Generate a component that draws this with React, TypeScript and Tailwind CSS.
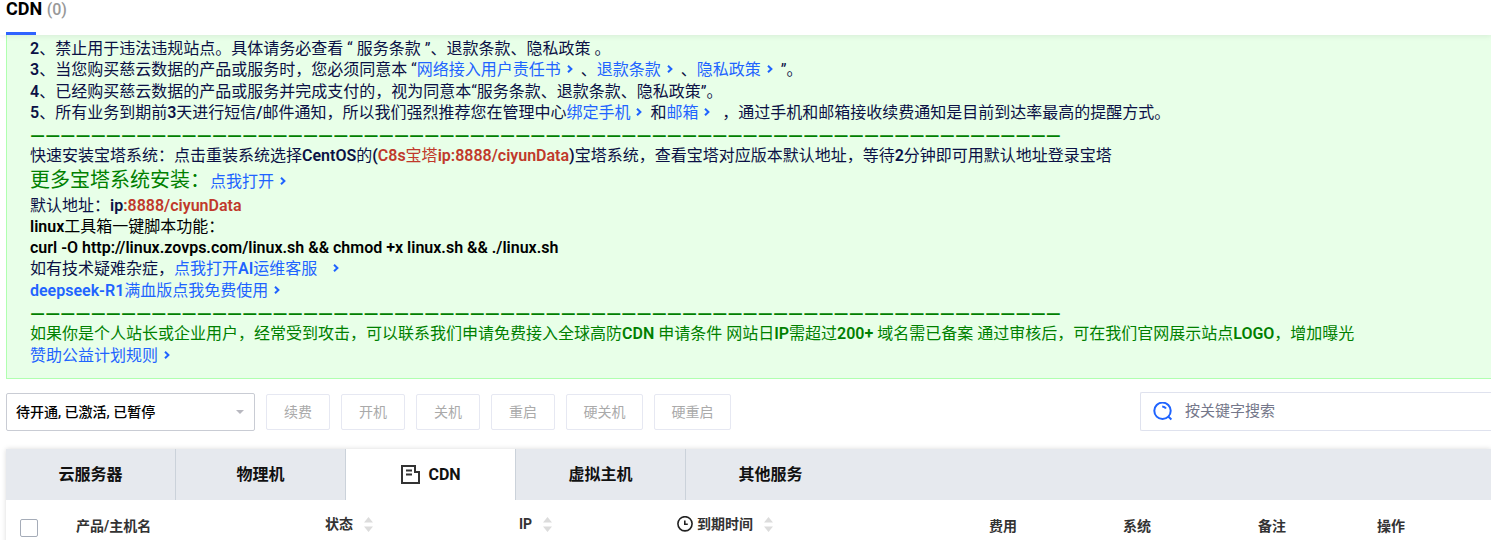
import React from "react";

const divider = "—".repeat(68);

const actions = [
  { name: "续费", width: "w-16" },
  { name: "开机", width: "w-16" },
  { name: "关机", width: "w-16" },
  { name: "重启", width: "w-16" },
  { name: "硬关机", width: "w-[77px]" },
  { name: "硬重启", width: "w-[77px]" },
];

const tabs = ["云服务器", "物理机", "CDN", "虚拟主机", "其他服务"];

const columns = [
  { name: "产品/主机名", width: "w-[249px]" },
  { name: "状态", width: "w-[194px]", sortable: true },
  { name: "IP", width: "w-[158px]", sortable: true },
  { name: "到期时间", width: "w-[312px]", sortable: true, clock: true },
  { name: "费用", width: "w-[134px]" },
  { name: "系统", width: "w-[135px]" },
  { name: "备注", width: "w-[119px]" },
  { name: "操作", width: "w-auto" },
];

const B = ({ children }: { children: React.ReactNode }) => (
  <span className="font-semibold">{children}</span>
);

const NoticeLink = ({
  children,
  wide,
}: {
  children: React.ReactNode;
  wide?: boolean;
}) => (
  <a href="#" className="text-[#1f64ff] hover:underline">
    {children}
    <svg
      viewBox="0 0 6 8"
      className={`inline-block h-2 w-1.5 align-[2px] ${wide ? "ml-4" : "ml-1.5"}`}
      fill="none"
      stroke="currentColor"
      strokeWidth="2"
      aria-hidden="true"
    >
      <path d="M1 0.8 L4.4 4 L1 7.2" />
    </svg>
  </a>
);

const Divider = () => (
  <p className="font-[Lato] text-[19px] leading-[21px] font-bold text-[#008000]">{divider}</p>
);

const SortArrows = () => (
  <svg viewBox="0 0 9 15" className="h-[15px] w-[9px]" fill="#dcdcdc" aria-hidden="true">
    <path d="M0 5.5 L4.5 0 L9 5.5 Z M0 9.5 L4.5 15 L9 9.5 Z" />
  </svg>
);

const ClockIcon = () => (
  <svg
    viewBox="0 0 16 16"
    className="h-4 w-4"
    fill="none"
    stroke="#222"
    strokeWidth="1.6"
    aria-hidden="true"
  >
    <circle cx="8" cy="7.8" r="7.1" />
    <path d="M7.8 4.5 V8.2 H10.8" />
  </svg>
);

const CdnIcon = () => (
  <svg
    viewBox="0 0 20 20"
    className="h-5 w-5"
    fill="none"
    stroke="#333"
    strokeWidth="2"
    aria-hidden="true"
  >
    <path d="M2 1 H15 V7 H19 V18 H2 Z" />
    <path d="M6 5.5 H12 M6 9.5 H12" />
  </svg>
);

const SearchIcon = () => (
  <svg
    viewBox="0 0 20 20"
    className="h-5 w-5 shrink-0"
    fill="none"
    stroke="#1f64ff"
    strokeWidth="2"
    aria-hidden="true"
  >
    <circle cx="9.5" cy="8.8" r="8.2" />
    <path d="M15.2 14.6 L18.4 17.6" />
    <path d="M9.2 4.4 C11 4.4 12.2 5.2 13 6.6" />
  </svg>
);

const Header = () => (
  <header className="relative h-[35px] bg-white pl-1.5 shadow-[0_1px_6px_rgba(0,0,0,0.08)]">
    <div className="flex h-full w-fit flex-col justify-between">
      <h1 className="text-lg leading-[18px] font-bold text-black">
        CDN <span className="text-base leading-[18px] font-medium text-[#999]">(0)</span>
      </h1>
      <div className="h-[3px] w-[30px] bg-[#2f62ff]" />
    </div>
  </header>
);

const Notice = () => (
  <section className="ml-1.5 border-b border-l border-[#b0ffb0] bg-[#e8ffe8] pt-[3px] pb-[11px] pl-[23px] text-base leading-[21px] whitespace-nowrap text-[#0b1145]">
    <p>
      <B>2</B>、禁止用于违法违规站点。具体请务必查看 “ 服务条款 ”、退款条款、隐私政策 。
    </p>
    <p className="leading-[22px]">
      <B>3</B>、当您购买慈云数据的产品或服务时，您必须同意本 “
      <NoticeLink>网络接入用户责任书</NoticeLink> &nbsp;、<NoticeLink>退款条款</NoticeLink>{" "}
      &nbsp;、<NoticeLink>隐私政策</NoticeLink> &nbsp;”。
    </p>
    <p>
      <B>4</B>、已经购买慈云数据的产品或服务并完成支付的，视为同意本“服务条款、退款条款、隐私政策”。
    </p>
    <p className="leading-[22px]">
      <B>5</B>、所有业务到期前<B>3</B>天进行短信<B>/</B>
      邮件通知，所以我们强烈推荐您在管理中心<NoticeLink>绑定手机</NoticeLink> &nbsp;和
      <NoticeLink>邮箱</NoticeLink> &nbsp; ，通过手机和邮箱接收续费通知是目前到达率最高的提醒方式。
    </p>
    <Divider />
    <p className="leading-[22px]">
      快速安装宝塔系统：点击重装系统选择<B>CentOS</B>的<B>(</B>
      <span className="text-[#c0392b]">
        <B>C8s</B>宝塔<B>ip:8888/ciyunData</B>
      </span>
      <B>)</B>宝塔系统，查看宝塔对应版本默认地址，等待<B>2</B>分钟即可用默认地址登录宝塔
    </p>
    <p className="leading-[27px]">
      <span className="text-xl leading-[27px] text-[#008000]">更多宝塔系统安装：</span>
      <NoticeLink>点我打开</NoticeLink>
    </p>
    <p>
      默认地址：<B>ip<span className="text-[#c0392b]">:8888/ciyunData</span></B>
    </p>
    <p className="text-black">
      <B>linux</B>工具箱一键脚本功能：
    </p>
    <p className="font-semibold text-black">
      curl -O http://linux.zovps.com/linux.sh && chmod +x linux.sh && ./linux.sh
    </p>
    <p className="leading-[22px]">
      如有技术疑难杂症，
      <NoticeLink wide>
        点我打开<B>AI</B>运维客服
      </NoticeLink>
    </p>
    <p className="leading-[22px]">
      <NoticeLink>
        <B>deepseek-R1</B>满血版点我免费使用
      </NoticeLink>
    </p>
    <Divider />
    <p className="leading-[22px] text-[#008000]">
      如果你是个人站长或企业用户，经常受到攻击，可以联系我们申请免费接入全球高防<B>CDN</B> 申请条件
      网站日<B>IP</B>需超过<B>200+</B> 域名需已备案 通过审核后，可在我们官网展示站点<B>LOGO</B>
      ，增加曝光
    </p>
    <p className="leading-[22px]">
      <NoticeLink>赞助公益计划规则</NoticeLink>
    </p>
  </section>
);

const Toolbar = () => (
  <div className="mt-[13px] ml-1.5 flex items-center justify-between">
    <div className="flex items-center gap-[11px]">
      <div className="relative">
        <select
          aria-label="状态筛选"
          className="h-[38px] w-[249px] appearance-none rounded-xs border border-[#c9ccd4] bg-white pl-[9px] text-sm font-medium text-black"
        >
          <option>待开通, 已激活, 已暂停</option>
        </select>
        <svg
          viewBox="0 0 8 4"
          className="pointer-events-none absolute top-[17px] right-[11px] h-1 w-2"
          fill="#b8b8c0"
          aria-hidden="true"
        >
          <path d="M0 0 H8 L4 4 Z" />
        </svg>
      </div>
      {actions.map((action) => (
        <button
          key={action.name}
          type="button"
          disabled
          className={`h-9 rounded-xs border border-[#e6e8f2] bg-white text-sm text-[#aaa] ${action.width}`}
        >
          {action.name}
        </button>
      ))}
    </div>
    <label className="flex h-[39px] w-[351px] items-center gap-3 rounded-l-xs border border-r-0 border-[#dfe2ee] pl-3">
      <SearchIcon />
      <input
        type="text"
        aria-label="按关键字搜索"
        placeholder="按关键字搜索"
        className="min-w-0 flex-1 text-[15px] placeholder-[#74778a] focus:outline-none"
      />
    </label>
  </div>
);

const App = () => (
  <div className="overflow-x-hidden bg-white font-[Roboto,'Noto_Sans_CJK_SC',sans-serif]">
    <Header />
    <Notice />
    <Toolbar />
    <div className="mt-[18px] ml-1.5 shadow-[0_0_5px_rgba(0,0,0,0.15)]">
      <div className="flex bg-[#e6e9ee]" role="tablist">
        {tabs.map((tab) => (
          <button
            key={tab}
            type="button"
            role="tab"
            aria-selected={tab === "CDN"}
            className={`flex h-[51px] w-[170px] items-center justify-center gap-2 border-r border-[#cbd2da] text-base font-bold text-[#111] last:border-transparent ${
              tab === "CDN" ? "bg-white" : ""
            }`}
          >
            {tab === "CDN" && <CdnIcon />}
            {tab}
          </button>
        ))}
      </div>
      <table className="w-full table-fixed text-left text-sm text-[#333]">
        <thead>
          <tr>
            <th className="w-[70px] pt-[19px] pb-3 pl-3.5 align-top">
              <input
                type="checkbox"
                aria-label="全选"
                className="block h-[18px] w-[18px] appearance-none rounded-xs border border-[#a5acb8] bg-white"
              />
            </th>
            {columns.map((column) => (
              <th
                key={column.name}
                className={`align-top font-bold whitespace-nowrap ${column.width} ${
                  column.sortable ? "pt-3.5" : "pt-4"
                }`}
              >
                <span className="flex items-center">
                  {column.clock && (
                    <span className="mr-1">
                      <ClockIcon />
                    </span>
                  )}
                  {column.name}
                  {column.sortable && (
                    <span className="ml-[11px]">
                      <SortArrows />
                    </span>
                  )}
                </span>
              </th>
            ))}
          </tr>
        </thead>
      </table>
    </div>
  </div>
);

export default App;
